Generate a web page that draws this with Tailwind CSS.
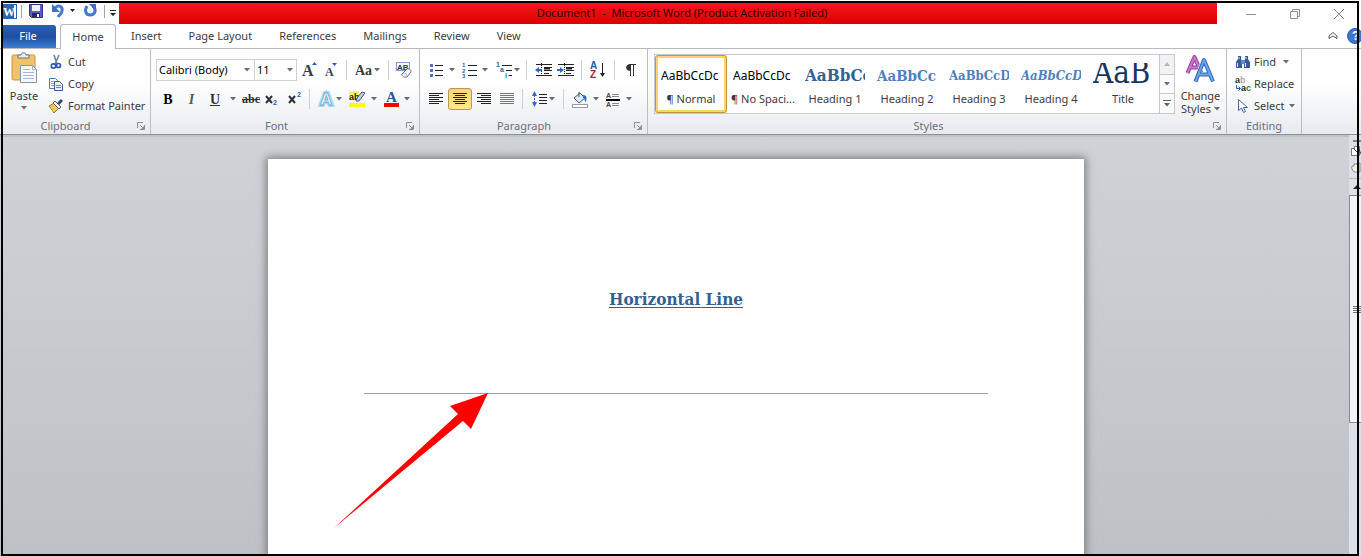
<!DOCTYPE html>
<html lang="en">
<head>
<meta charset="utf-8">
<title>Document1 - Microsoft Word</title>
<script src="https://cdn.jsdelivr.net/npm/@tailwindcss/browser@4"></script>
</head>
<body class="bg-white font-['Noto_Sans',sans-serif] text-[11px] text-[#3b3b3b]">
<svg class="hidden">
  <symbol id="dd" viewBox="0 0 6 4"><path d="M0 0h6L3 3.5z" fill="#6b6c70"/></symbol>
  <symbol id="launch" viewBox="0 0 8 8"><path d="M.5 6V.5H6" fill="none" stroke="#8a8f96"/><path d="M3 3l3 3M7.5 3v4.500H3" fill="none" stroke="#8a8f96"/><path d="M7 4v3H4z" fill="#8a8f96"/></symbol>
</svg>
<div class="relative flex min-h-screen flex-col overflow-hidden">
  <header class="flex h-6 items-stretch">
    <div class="flex w-[119px] shrink-0 items-start pl-[2px]">
      <svg class="h-[22px] w-[117px]" viewBox="2 0 117 22">
        <rect x="2.500" y="4.500" width="14" height="14" fill="#fff" stroke="#2c62ad"/><rect x="3" y="5" width="11" height="13" fill="#2a66b4"/><text x="3" y="16" font-family="Liberation Serif" font-weight="bold" font-size="12" fill="#fff">W</text>
        <path d="M21.500 5v13M104.500 5v13" stroke="#a2a6ac"/>
        <path d="M29.500 4.500h13v13h-11l-2-2z" fill="#5a5fc0" stroke="#2e3190"/><rect x="32" y="5" width="8" height="6" fill="#eef2fb"/><rect x="32" y="13" width="8" height="4" fill="#222b66"/><rect x="37" y="14" width="2" height="3" fill="#fff"/>
        <path d="M55 8c4-4 8-1 7 3-.5 3-3 4-4 6" fill="none" stroke="#4a7ac6" stroke-width="3"/><path d="M52 4v8h8z" fill="#3f6fbd"/>
        <path d="M70 9h5l-2.500 3zM110 13h6l-3 3z" fill="#222"/><path d="M110 10.500h6" stroke="#222"/>
        <path d="M87 6c-3 5-1 9 3 9 5 0 7-5 3-9" fill="none" stroke="#3f7cd0" stroke-width="3"/><path d="M89 4h7v7z" fill="#3f6fbd"/>
      </svg>
    </div>
    <h1 class="mt-[3px] flex flex-1 items-center justify-center bg-linear-to-b from-[#f51616] to-[#dc0000] pl-7 font-['Open_Sans',sans-serif] text-[11px] whitespace-pre text-[#210000]">Document1  -  Microsoft Word (Product Activation Failed)</h1>
    <div class="flex w-36 shrink-0 items-center pt-1 pl-3 text-[#8f8f8f]">
      <button aria-label="Minimize" class="flex flex-1 justify-center"><svg class="h-3 w-3" viewBox="0 0 12 12"><path d="M1 6.500h10" stroke="currentColor"/></svg></button>
      <button aria-label="Restore" class="flex flex-1 justify-center"><svg class="h-3 w-3" viewBox="0 0 12 12"><path d="M1.500 3.500h7v7h-7zM3.500 3V1.500h7v7H9" fill="none" stroke="currentColor"/></svg></button>
      <button aria-label="Close" class="flex flex-1 justify-center"><svg class="h-3 w-3" viewBox="0 0 12 12"><path d="M1 1l10 10M11 1L1 11" stroke="currentColor"/></svg></button>
    </div>
  </header>

  <nav class="flex h-[25px] items-stretch border-b border-[#b6babf] pl-[2px]">
    <button class="mt-px w-[54px] rounded-tr-[3px] bg-linear-to-b from-[#2b62b5] via-[#1d4fa0] to-[#3c7fd4] pr-[2px] text-white">File</button>
    <button class="-mb-px ml-1 w-14 rounded-t-[3px] border border-b-0 border-[#b6babf] bg-white">Home</button>
    <div class="flex flex-1 items-center gap-[27px] pt-px pl-[15px]">
      <button>Insert</button><button>Page Layout</button><button>References</button><button>Mailings</button><button>Review</button><button>View</button>
    </div>
    <div class="flex w-[34px] shrink-0 items-center gap-2">
      <button aria-label="Minimize the Ribbon" class="shrink-0"><svg class="h-3 w-3" viewBox="0 0 12 12"><path d="M2 6l4-3.500L10 6v2.500L6 6 2 8.500z" fill="#fff" stroke="#55595f"/></svg></button>
      <button aria-label="Help" class="shrink-0"><svg class="h-4 w-4" viewBox="0 0 16 16"><circle cx="8" cy="8" r="7.500" fill="#3f76cc" stroke="#2a5cab"/><text x="5" y="12" font-family="Liberation Sans" font-weight="bold" font-size="12" fill="#fff">?</text></svg></button>
    </div>
  </nav>

  <div class="flex h-[86px] border-b border-[#8b9097] bg-linear-to-b from-white from-40% to-[#e7eaee]">
    <section class="flex w-[151px] shrink-0 flex-col border-r border-[#b9bdc4]">
      <div class="flex h-[69px] pl-[6px]">
        <button class="flex w-9 flex-col items-center pt-[3px]">
          <svg class="h-9 w-8" viewBox="0 1 32 36">
            <rect x="4" y="4" width="23" height="25" rx="1.500" fill="#f0c36a" stroke="#c9963c"/><path d="M10 7V4h3c0-3 5-3 5 0h3v3z" fill="#e9ebee" stroke="#6c7178"/>
            <path d="M12.500 14.500h12l4 4v13h-16z" fill="#f6f9fd" stroke="#8394ae"/><path d="M24.500 14.500v4h4M15 18.500h7M15 21.500h11M15 24.500h11M15 27.500h11" fill="none" stroke="#a9b7cd"/>
          </svg>
          <span class="pt-px leading-[14px]">Paste</span>
          <svg class="mt-[3px] h-1 w-[6px]"><use href="#dd"/></svg>
        </button>
        <div class="flex flex-col items-start gap-0 pt-[2px] pl-[6px]">
          <button class="flex h-[22px] items-center gap-1"><svg class="h-4 w-4" viewBox="0 0 16 16"><path d="M6 1l3 9M11 1L7 10" stroke="#7a8796" stroke-width="1.700"/><circle cx="5.500" cy="12" r="2.200" fill="none" stroke="#2b5cae" stroke-width="1.700"/><circle cx="10.500" cy="11.500" r="2" fill="none" stroke="#2b5cae" stroke-width="1.700"/></svg>Cut</button>
          <button class="flex h-[22px] items-center gap-1"><svg class="h-4 w-4" viewBox="0 0 16 16"><path d="M1.500 2.500h6l3 3v7h-9z" fill="#fff" stroke="#4f78b8"/><path d="M3 5.500h3M3 7.500h3M3 9.500h3" stroke="#7fa0d4"/><path d="M6.500 5.500h5l3 3v6h-8z" fill="#e7f0fc" stroke="#345fa6"/><path d="M8 9.500h5M8 11.500h5" stroke="#5f8acb"/></svg>Copy</button>
          <button class="flex h-[22px] items-center gap-1 whitespace-nowrap"><svg class="h-4 w-4" viewBox="0 0 16 16"><path d="M1 8l5-3 5 5-5 5c-1-2-2-3-5-7z" fill="#eccb5b" stroke="#a37b25"/><path d="M5 5l2-2 6 6-2 2z" fill="#f2f2f2" stroke="#5c6068"/><path d="M10 6l4-4" stroke="#3a4674" stroke-width="3"/></svg>Format Painter</button>
        </div>
      </div>
      <div class="flex h-4 items-center pr-[5px] text-[#69707f]"><h2 class="flex-1 pr-[6px] text-center">Clipboard</h2><button aria-label="Clipboard options"><svg class="h-2 w-2"><use href="#launch"/></svg></button></div>
    </section>

    <section class="flex w-[269px] shrink-0 flex-col border-r border-[#b9bdc4] pl-[2px]">
      <div class="flex h-[69px] flex-col gap-[7px] pt-[10px]">
        <div class="flex h-[22px] items-center pl-[3px]">
          <div class="flex h-[22px] w-[99px] items-center border border-[#cdd0d4] bg-white"><input aria-label="Font" value="Calibri (Body)" class="w-[87px] pl-[2px] text-black outline-none"><svg class="h-1 w-[6px]"><use href="#dd"/></svg></div>
          <div class="-ml-px flex h-[22px] w-[43px] items-center border border-[#cdd0d4] bg-white"><input aria-label="Font size" value="11" class="w-[32px] pl-[2px] text-black outline-none"><svg class="h-1 w-[6px]"><use href="#dd"/></svg></div>
          <button aria-label="Grow font" class="ml-[2px]"><svg class="h-[22px] w-6" viewBox="0 0 24 22"><text x="3" y="17" font-family="Liberation Serif" font-weight="bold" font-size="16" fill="#3a3d42">A</text><path d="M13 6h5l-2.500-3z" fill="#2b5cae"/></svg></button>
          <button aria-label="Shrink font"><svg class="h-[22px] w-[23px]" viewBox="0 0 23 22"><text x="2" y="17" font-family="Liberation Serif" font-weight="bold" font-size="12" fill="#3a3d42">A</text><path d="M9 4h5l-2.500 3z" fill="#2b5cae"/></svg></button>
          <i class="h-5 w-px bg-[#cbd0d8]"></i>
          <button aria-label="Change case" class="flex w-[41px] items-center justify-center gap-[2px]"><span class="font-['Liberation_Serif',serif] text-[14px] font-bold">Aa</span><svg class="h-1 w-[6px]"><use href="#dd"/></svg></button>
          <i class="h-5 w-px bg-[#cbd0d8]"></i>
          <button aria-label="Clear formatting" class="ml-[7px]"><svg class="h-[18px] w-[17px]" viewBox="0 0 17 18"><rect x=".5" y="1.500" width="13" height="8" fill="#f5f8fc" stroke="#7f9bc8"/><text x="1" y="9" font-family="Liberation Sans" font-weight="bold" font-size="8" fill="#333">AB</text><path d="M6 13l5-5c1-1 5 1 4 3l-4 5c-2 1-6-1-5-3z" fill="#f4f5f8" stroke="#66718a"/><path d="M7 12c2 0 4 1 4 3" fill="none" stroke="#9aa5ba"/></svg></button>
        </div>
        <div class="flex h-[22px] items-center pl-[3px] font-['Liberation_Serif',serif] font-bold text-[#2e3033]">
          <button aria-label="Bold" class="w-6 text-[14px] text-black">B</button>
          <button aria-label="Italic" class="w-[23px] text-[14px] text-[#55585e] italic">I</button>
          <button aria-label="Underline" class="w-6 text-[14px] underline">U</button>
          <button aria-label="Underline style" class="flex w-3 justify-center"><svg class="h-1 w-[6px]"><use href="#dd"/></svg></button>
          <button aria-label="Strikethrough" class="w-6 text-[12px] line-through">abc</button>
          <button aria-label="Subscript"><svg class="h-[22px] w-[22px]" viewBox="0 0 22 22"><path d="M3 8l6 7M9 8l-6 7" stroke="#2e3033" stroke-width="2"/><text x="10" y="17" font-family="Liberation Sans" font-weight="bold" font-size="7" fill="#2b5cae">2</text></svg></button>
          <button aria-label="Superscript"><svg class="h-[22px] w-6" viewBox="0 0 24 22"><path d="M4 8l6 7M10 8l-6 7" stroke="#2e3033" stroke-width="2"/><text x="12" y="9" font-family="Liberation Sans" font-weight="bold" font-size="7" fill="#2b5cae">2</text></svg></button>
          <i class="h-5 w-px bg-[#cbd0d8]"></i>
          <button aria-label="Text effects" class="flex w-8 items-center justify-end gap-px"><svg class="h-[18px] w-[18px]" viewBox="0 0 18 18"><text x="3" y="15" font-family="Liberation Sans" font-weight="bold" font-size="17" fill="#fff" stroke="#a9d7f2" stroke-width="4">A</text><text x="3" y="15" font-family="Liberation Sans" font-weight="bold" font-size="17" fill="#fff" stroke="#6aa9d8" stroke-width=".8">A</text></svg><svg class="h-1 w-[6px]"><use href="#dd"/></svg></button>
          <button aria-label="Highlight color" class="flex w-[35px] items-center justify-end gap-[5px]"><svg class="h-[18px] w-[18px]" viewBox="0 0 18 18"><rect x="1" y="1" width="10" height="9" fill="#f8ef7c"/><text x="1" y="10" font-family="Liberation Sans" font-weight="bold" font-size="9" fill="#222">ab</text><path d="M8 11l1-3 5-6 3 1-6 8z" fill="#c7cee0" stroke="#3d5489"/><path d="M1 15h16" stroke="#ff0" stroke-width="4"/></svg><svg class="h-1 w-[6px]"><use href="#dd"/></svg></button>
          <button aria-label="Font color" class="flex w-[33px] items-center justify-end gap-1"><svg class="h-[18px] w-[17px]" viewBox="0 0 17 18"><text x="3" y="12" font-family="Liberation Serif" font-weight="bold" font-size="15" fill="#2b569f">A</text><path d="M1 15h15" stroke="#f00" stroke-width="4"/></svg><svg class="h-1 w-[6px]"><use href="#dd"/></svg></button>
        </div>
      </div>
      <div class="flex h-4 items-center pr-[5px] text-[#69707f]"><h2 class="flex-1 pr-[6px] text-center">Font</h2><button aria-label="Font options"><svg class="h-2 w-2"><use href="#launch"/></svg></button></div>
    </section>

    <section class="flex w-[228px] shrink-0 flex-col border-r border-[#b9bdc4] pl-1">
      <div class="flex h-[69px] flex-col gap-[7px] pt-[10px]">
        <div class="flex h-[22px] items-center pl-[5px]">
          <button aria-label="Bullets" class="flex w-[34px] items-center gap-1"><svg class="h-4 w-4" viewBox="0 0 16 16"><path d="M1 3.500h3M1 8.500h3M1 13.500h3" stroke="#4b73bb" stroke-width="3"/><path d="M6 3.500h8M6 8.500h8M6 13.500h8" stroke="#222"/></svg><svg class="h-1 w-[6px]"><use href="#dd"/></svg></button>
          <button aria-label="Numbering" class="flex w-[34px] items-center gap-1"><svg class="h-4 w-4" viewBox="0 0 16 16"><g font-family="Liberation Sans" font-weight="bold" font-size="6" fill="#2f5fb0"><text x="0" y="5">1</text><text x="0" y="10.500">2</text><text x="0" y="16">3</text></g><path d="M6 3.500h9M6 8.500h9M6 13.500h9" stroke="#222"/></svg><svg class="h-1 w-[6px]"><use href="#dd"/></svg></button>
          <button aria-label="Multilevel list" class="flex w-[31px] items-center"><svg class="h-4 w-[18px]" viewBox="0 0 18 16"><g font-family="Liberation Sans" font-weight="bold" font-size="7" fill="#2f5fb0"><text x="0" y="5">1</text><text x="4" y="10">a</text><text x="9" y="16">i</text></g><path d="M6 3.500h10M10 8.500h6M12.500 13.500H16" stroke="#222"/></svg><svg class="h-1 w-[6px]"><use href="#dd"/></svg></button>
          <i class="h-5 w-px bg-[#cbd0d8]"></i>
          <button aria-label="Decrease indent" class="ml-2"><svg class="h-4 w-[22px]" viewBox="0 0 22 16"><path d="M1 2.500h16M9 5.500h8M9 8.500h8M9 11.500h5M1 13.500h16" stroke="#222"/><path d="M9 6.500h6" stroke="#222" stroke-width="2"/><path d="M6.500 1v14" stroke="#222" stroke-dasharray="1 1"/><path d="M0 8l4-3v2h3v2H4v2z" fill="#2f6cc8"/></svg></button>
          <button aria-label="Increase indent"><svg class="h-4 w-[22px]" viewBox="0 0 22 16"><path d="M1 2.500h16M9 5.500h8M9 8.500h8M9 11.500h5M1 13.500h16" stroke="#222"/><path d="M9 6.500h6" stroke="#222" stroke-width="2"/><path d="M7.500 1v14" stroke="#222" stroke-dasharray="1 1"/><path d="M7 8L3 5v2H0v2h3v2z" fill="#2f6cc8"/></svg></button>
          <i class="ml-[2px] h-5 w-px bg-[#cbd0d8]"></i>
          <button aria-label="Sort" class="flex w-8 justify-center"><svg class="h-[18px] w-[18px]" viewBox="0 0 18 18"><g font-family="Liberation Sans" font-weight="bold" font-size="10"><text x="1" y="8" fill="#2b569f">A</text><text x="1" y="17" fill="#a02f2f">Z</text></g><path d="M13.500 2v12" stroke="#222"/><path d="M11 12h5l-2.500 4z" fill="#222"/></svg></button>
          <i class="h-5 w-px bg-[#cbd0d8]"></i>
          <button aria-label="Show marks" class="flex w-[33px] justify-center"><svg class="h-4 w-3" viewBox="0 0 12 16"><path d="M5.500 3v11M8.500 3v11M4 2.500h7" stroke="#333"/><path d="M6 2C-.5 2-.5 9 6 9z" fill="#333"/></svg></button>
        </div>
        <div class="flex h-[22px] items-center">
          <button aria-label="Align left" class="flex w-6 justify-center"><svg class="h-3 w-[14px]" viewBox="0 0 14 12"><path d="M0 .5h14M0 2.500h10M0 4.500h14M0 6.500h10M0 8.500h14M0 10.500h10" stroke="#222"/></svg></button>
          <button aria-label="Center" aria-pressed="true" class="flex h-[22px] w-6 items-center justify-center rounded-[3px] border border-[#c29446] bg-linear-to-b from-[#fcd679] to-[#ffe98d]"><svg class="h-3 w-[14px]" viewBox="0 0 14 12"><path d="M0 .5h14M2 2.500h10M0 4.500h14M2 6.500h10M0 8.500h14M2 10.500h10" stroke="#222"/></svg></button>
          <button aria-label="Align right" class="flex w-6 justify-center"><svg class="h-3 w-[14px]" viewBox="0 0 14 12"><path d="M0 .5h14M4 2.500h10M0 4.500h14M4 6.500h10M0 8.500h14M4 10.500h10" stroke="#222"/></svg></button>
          <button aria-label="Justify" class="flex w-[22px] justify-center"><svg class="h-3 w-[14px]" viewBox="0 0 14 12"><path d="M0 .5h14M0 2.500h14M0 4.500h14M0 6.500h14M0 8.500h14M0 10.500h14" stroke="#777"/></svg></button>
          <i class="ml-1 h-5 w-px bg-[#cbd0d8]"></i>
          <button aria-label="Line spacing" class="flex w-10 items-center justify-center gap-px"><svg class="h-4 w-[17px]" viewBox="0 0 17 16"><path d="M1 5l2.500-5L6 5zM1 11l2.500 5L6 11z" fill="#2f6cc8"/><path d="M3.500 4v8" stroke="#2f6cc8" stroke-dasharray="2 1"/><path d="M8 3.500h8M8 6.500h8M8 9.500h8M8 12.500h8" stroke="#222"/></svg><svg class="h-1 w-[6px]"><use href="#dd"/></svg></button>
          <i class="h-5 w-px bg-[#cbd0d8]"></i>
          <button aria-label="Shading" class="ml-[7px] flex w-[34px] items-center gap-[5px]"><svg class="h-[17px] w-[17px]" viewBox="0 0 17 17"><path d="M3 7l6-5 5 5-6 5z" fill="#dfe8f5" stroke="#40557e"/><path d="M8 1v5" stroke="#40557e"/><path d="M12 4c4 0 4 3 3 7-2-1-1-4-3-4z" fill="#2f6cc8"/><rect x="1.500" y="13.500" width="15" height="3" fill="#fff" stroke="#999"/></svg><svg class="h-1 w-[6px]"><use href="#dd"/></svg></button>
          <button aria-label="Borders" class="flex w-[34px] items-center gap-[5px]"><svg class="h-[17px] w-4" viewBox="0 0 16 17"><g font-family="Liberation Sans" font-size="7" font-weight="bold" fill="#444"><text x="1" y="7">A</text><text x="1" y="16">A</text></g><path d="M7 3.500h7M7 5.500h7M7 12.500h7M7 14.500h7" stroke="#888"/><path d="M1 9h14" stroke="#000" stroke-width="2"/></svg><svg class="h-1 w-[6px]"><use href="#dd"/></svg></button>
        </div>
      </div>
      <div class="flex h-4 items-center pr-[5px] text-[#69707f]"><h2 class="flex-1 pr-[10px] text-center">Paragraph</h2><button aria-label="Paragraph options"><svg class="h-2 w-2"><use href="#launch"/></svg></button></div>
    </section>

    <section class="flex w-[579px] shrink-0 flex-col border-r border-[#b9bdc4] pl-[6px]">
      <div class="flex h-[69px] pt-[5px]">
        <div class="flex h-[60px] w-[521px] border border-[#c6cad0] bg-white">
          <button class="flex w-[72px] flex-col rounded-[3px] border-[3px] border-[#fbd66d] px-[3px] outline outline-[#c29446] -outline-offset-1"><span class="flex h-8 w-full items-center overflow-hidden pt-1 text-[12px] text-black">AaBbCcDc</span><span class="w-full pt-px text-center leading-4 whitespace-nowrap">¶ Normal</span></button>
          <button class="flex w-[72px] flex-col px-[6px] pt-[3px]"><span class="flex h-8 w-full items-center overflow-hidden pt-1 text-[12px] text-black">AaBbCcDc</span><span class="-mx-1 self-center pt-px leading-4 whitespace-nowrap">¶ No Spaci...</span></button>
          <button class="flex w-[72px] flex-col px-[6px] pt-[3px]"><span class="flex h-8 w-full items-center overflow-hidden pt-1 font-['DejaVu_Serif_Condensed','DejaVu_Serif',serif] text-[17px] font-bold text-[#365f91]">AaBbCc</span><span class="w-full pt-px text-center leading-4">Heading 1</span></button>
          <button class="flex w-[72px] flex-col px-[6px] pt-[3px]"><span class="flex h-8 w-full items-center overflow-hidden pt-1 font-['DejaVu_Serif_Condensed','DejaVu_Serif',serif] text-[15px] font-bold text-[#4f81bd]">AaBbCc</span><span class="w-full pt-px text-center leading-4">Heading 2</span></button>
          <button class="flex w-[72px] flex-col px-[6px] pt-[3px]"><span class="flex h-8 w-full items-center overflow-hidden pt-1 font-['DejaVu_Serif_Condensed','DejaVu_Serif',serif] text-[13px] font-bold text-[#4f81bd]">AaBbCcD</span><span class="w-full pt-px text-center leading-4">Heading 3</span></button>
          <button class="flex w-[72px] flex-col px-[6px] pt-[3px]"><span class="flex h-8 w-full items-center overflow-hidden pt-1 font-['DejaVu_Serif_Condensed','DejaVu_Serif',serif] text-[13px] font-bold text-[#4f81bd] italic">AaBbCcD</span><span class="w-full pt-px text-center leading-4">Heading 4</span></button>
          <button class="flex w-[72px] flex-col px-[6px] pt-[3px]"><span class="mt-[5px] flex h-[27px] w-full items-center overflow-hidden pb-2 font-['DejaVu_Serif_Condensed','DejaVu_Serif',serif] text-[31px] text-[#17365d]">AaB</span><span class="w-full pt-px text-center leading-4">Title</span></button>
          <div class="flex flex-1 flex-col divide-y divide-[#c6cad0] border-l border-[#c6cad0] bg-[#fafbfc]">
            <button aria-label="Scroll up" class="flex flex-1 items-center justify-center bg-[#f0f2f4]"><svg class="h-1 w-[6px]" viewBox="0 0 6 4"><path d="M0 4h6L3 0z" fill="#b5b9be"/></svg></button>
            <button aria-label="Scroll down" class="flex flex-1 items-center justify-center"><svg class="h-1 w-[6px]"><use href="#dd"/></svg></button>
            <button aria-label="More styles" class="flex flex-1 items-center justify-center"><svg class="h-[7px] w-2" viewBox="0 0 8 7"><path d="M0 .5h8" stroke="#5f6063"/><path d="M1 3h6L4 6.500z" fill="#5f6063"/></svg></button>
          </div>
        </div>
        <button class="flex w-[51px] flex-col items-center leading-[13px]">
          <svg class="h-[30px] w-8" viewBox="0 0 32 30"><g fill="none" stroke-linejoin="round"><path d="M2.500 19L9.500 3l7 16M5 13.500h9" stroke="#8f3c96" stroke-width="4"/><path d="M2.500 19L9.500 3l7 16M5 13.500h9" stroke="#c877cc" stroke-width="2"/><path d="M10.500 27.500L19 6l9 21.500M13 20.500h12" stroke="#fff" stroke-width="5"/><path d="M10.500 27.500L19 6l9 21.500M13 20.500h12" stroke="#2f66b8" stroke-width="4"/><path d="M10.500 27.500L19 6l9 21.500M13 20.500h12" stroke="#6aa5ee" stroke-width="2"/></g></svg>
          <span class="pt-[5px]">Change</span><span class="flex items-center gap-[3px]">Styles<svg class="h-1 w-[6px]"><use href="#dd"/></svg></span>
        </button>
      </div>
      <div class="flex h-4 items-center pr-[5px] text-[#69707f]"><h2 class="flex-1 pr-[10px] text-center">Styles</h2><button aria-label="Styles options"><svg class="h-2 w-2"><use href="#launch"/></svg></button></div>
    </section>

    <section class="flex w-[75px] shrink-0 flex-col border-r border-[#b9bdc4]">
      <div class="flex h-[69px] flex-col items-start pt-[2px] pl-2">
        <button class="flex h-[22px] items-center gap-[3px]"><svg class="h-4 w-4" viewBox="0 0 16 16"><path d="M1 14V8l2-3V2h3v3l1 3v6zM15 14V8l-2-3V2h-3v3L9 8v6z" fill="#345a9c"/><path d="M6 6h4v4H6z" fill="#5f86c6"/><path d="M2.500 9v4M10.500 9v4M4 3v2M11 3v2" stroke="#d7e4f8"/></svg>Find<svg class="ml-1 h-1 w-[6px]"><use href="#dd"/></svg></button>
        <button class="flex h-[22px] items-center gap-[3px]"><svg class="h-4 w-4" viewBox="0 0 16 16"><g font-family="Liberation Sans" font-weight="bold" font-size="9"><text x="0" y="7" fill="#333">a</text><text x="5" y="7" fill="#aaa">b</text><text x="6" y="15" fill="#222">a</text><text x="11" y="15" fill="#1d8a3a">c</text></g><path d="M1.500 9v3.500H5M3.500 10.500l2 2-2 2" fill="none" stroke="#2b5cae"/></svg>Replace</button>
        <button class="flex h-[22px] items-center gap-[3px]"><svg class="h-4 w-4" viewBox="0 0 16 16"><path d="M3.500 1.500v11l3-2.500 2 4.500 2-1-2-4h4z" fill="#fff" stroke="#4b6796"/></svg>Select<svg class="ml-px h-1 w-[6px]"><use href="#dd"/></svg></button>
      </div>
      <h2 class="h-4 text-center leading-4 text-[#69707f]">Editing</h2>
    </section>
  </div>

  <main class="flex flex-1 bg-linear-to-b from-[#cfd2d6] to-[#bec1c5]">
    <div class="flex flex-1 justify-center overflow-hidden border-t-2 border-[#bfc2c7] pt-[22px] pl-[3px]">
      <article class="relative w-full max-w-[816px] bg-white px-24 shadow-[0_0_8px_2px_#7c7f85]">
        <h2 class="pt-[128px] text-center font-['DejaVu_Serif_Condensed','DejaVu_Serif',serif] text-[17px] leading-6 font-bold text-[#365f91] underline underline-offset-2">Horizontal Line</h2>
        <hr class="mt-[82px] border-[#a0a0a0]">
        <svg class="absolute top-[233px] left-[66px] h-[138px] w-[156px]" viewBox="0 0 156 138"><path d="M154 1L116 14l8 8L0 136 129 29l8 8z" fill="#f00"/></svg>
      </article>
    </div>
    <aside class="flex w-3 shrink-0 flex-col overflow-hidden bg-[#dce1e8] pt-[3px]">
      <svg class="h-[57px] w-3" viewBox="0 0 12 57"><path d="M4 3h8" stroke="#7a838e" stroke-width="2"/><path d="M2.500 10.500h3v-2h5v9h-8z" fill="#fff" stroke="#707680"/><path d="M4 10l5 5M9 9l3 7" stroke="#444"/><path d="M5 34c-3-3-3-7 0-6v-2h3v-1h3v9z" fill="#f4f1e6" stroke="#7e8792"/><path d="M0 40.500h12" stroke="#b4b9c1"/><path d="M4 51l4-4 4 4z" fill="#222"/></svg>
      <div class="flex h-[228px] items-center border border-r-0 border-[#858b94] bg-[#f1f4f8] pl-[3px]"><svg class="h-[7px] w-2" viewBox="0 0 8 7"><path d="M0 .5h8M0 2.500h8M0 4.500h8M0 6.500h8" stroke="#70767f"/></svg></div>
    </aside>
  </main>
  <div class="pointer-events-none absolute top-px right-[2px] bottom-0 left-px border-2 border-black"></div>
</div>
</body>
</html>
